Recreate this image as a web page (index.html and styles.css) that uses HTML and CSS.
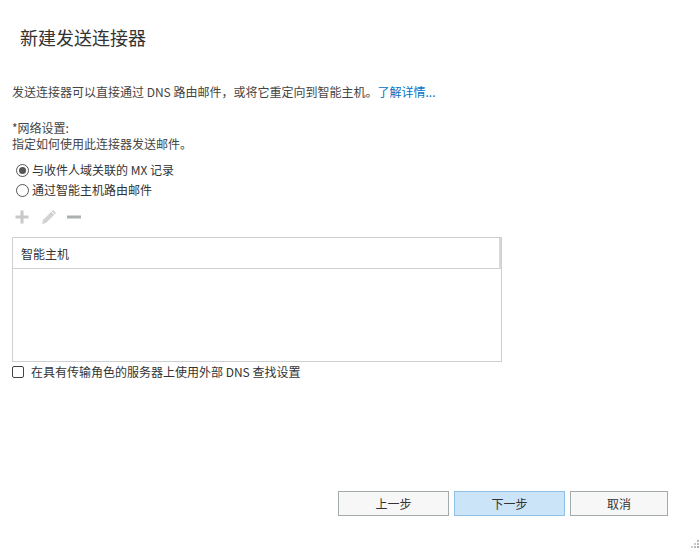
FILE: index.html
```html
<!DOCTYPE html>
<html lang="zh-CN">
<head>
<meta charset="utf-8">
<link rel="stylesheet" href="styles.css">
</head>
<body>
<div class="dialog">
  <h1 class="title">新建发送连接器</h1>
  <div class="content">
    <p class="desc">发送连接器可以直接通过 DNS 路由邮件，或将它重定向到智能主机。<a class="link" href="#">了解详情...</a></p>
    <div class="section">
      <div class="label">*网络设置:</div>
      <div class="label">指定如何使用此连接器发送邮件。</div>
    </div>
    <div class="radios">
      <label class="radio"><span class="circle checked"></span>与收件人域关联的 MX 记录</label>
      <label class="radio"><span class="circle"></span>通过智能主机路由邮件</label>
    </div>
    <div class="toolbar">
      <svg class="tool" width="16" height="16" viewBox="0 0 16 16"><path d="M6.5 1.5h3v5h5v3h-5v5h-3v-5h-5v-3h5z" fill="#c8c8c8"/></svg>
      <svg class="tool" width="18" height="16" viewBox="0 0 18 16"><path d="M14 1l3 3L7 14l-4 1 1-4z" fill="#d2d2d2"/><path d="M12.5 2.5l3 3" stroke="#fff" stroke-width="1"/></svg>
      <svg class="tool" width="16" height="16" viewBox="0 0 16 16"><rect x="1" y="6.5" width="14" height="3" fill="#aab1b1"/></svg>
    </div>
    <div class="grid">
      <div class="grid-head"><span>智能主机</span></div>
      <div class="grid-body"></div>
    </div>
    <label class="check"><span class="box"></span>在具有传输角色的服务器上使用外部 DNS 查找设置</label>
  </div>
  <div class="footer">
    <button class="btn">上一步</button>
    <button class="btn primary">下一步</button>
    <button class="btn cancel">取消</button>
  </div>
  <svg class="grip" width="10" height="10" viewBox="0 0 10 10"><rect x="8" y="2" width="2" height="2" fill="#bbb"/><rect x="5" y="5" width="2" height="2" fill="#ccc"/><rect x="8" y="5" width="2" height="2" fill="#bbb"/><rect x="2" y="8" width="2" height="2" fill="#ccc"/><rect x="5" y="8" width="2" height="2" fill="#bbb"/><rect x="8" y="8" width="2" height="2" fill="#aaa"/></svg>
</div>
</body>
</html>
```

FILE: styles.css
```css
* { box-sizing: border-box; }
html, body { margin: 0; padding: 0; background: #fff; }
body {
  font-family: "Noto Sans CJK SC", "Noto Sans", sans-serif;
  font-size: 12px;
  color: #333;
}
.dialog {
  position: relative;
  width: 700px;
  height: 549px;
  display: flex;
  flex-direction: column;
}
.title {
  margin: 26px 0 0 20px;
  font-size: 18px;
  font-weight: normal;
  line-height: 22px;
  color: #333;
}
.content {
  padding: 0 12px;
  flex: 1;
}
.desc {
  margin: 36px 0 0 0;
  line-height: 16px;
  color: #444;
}
.link { color: #0072c6; text-decoration: none; }
.section { margin-top: 20px; }
.label { line-height: 16px; color: #444; }
.radios {
  margin-top: 10px;
  display: flex;
  flex-direction: column;
  gap: 4px;
  padding-left: 4px;
}
.radio {
  display: flex;
  align-items: center;
  gap: 3px;
  line-height: 16px;
  color: #333;
}
.circle {
  width: 13px;
  height: 13px;
  border: 1px solid #555;
  border-radius: 50%;
  display: inline-flex;
  align-items: center;
  justify-content: center;
}
.circle.checked::after {
  content: "";
  width: 7px;
  height: 7px;
  border-radius: 50%;
  background: #555;
}
.toolbar {
  margin-top: 11px;
  display: flex;
  align-items: center;
  gap: 9px;
  padding-left: 2px;
  height: 16px;
}
.grid {
  margin-top: 12px;
  width: 490px;
  height: 125px;
  border: 1px solid #cdd0d3;
  display: flex;
  flex-direction: column;
}
.grid-head {
  height: 31px;
  border-bottom: 1px solid #cdd0d3;
  border-right: 2px solid #d6d8da;
  display: flex;
  align-items: center;
  padding-left: 8px;
  color: #333;
}
.grid-body { flex: 1; }
.check {
  margin-top: 2px;
  display: flex;
  align-items: center;
  gap: 7px;
  line-height: 16px;
  color: #333;
}
.box {
  width: 12px;
  height: 12px;
  border: 1px solid #444;
  border-radius: 2px;
}
.footer {
  display: flex;
  gap: 5px;
  padding: 0 0 33px 338px;
}
.btn {
  width: 111px;
  height: 25px;
  border: 1px solid #a3aaaa;
  background: #f7f7f7;
  font-family: inherit;
  font-size: 12px;
  color: #333;
  padding: 0;
}
.btn.primary { background: #cce4f7; border-color: #8fc0e6; }
.btn.cancel { width: 98px; }
.grip { position: absolute; right: 1px; bottom: 1px; }
```
